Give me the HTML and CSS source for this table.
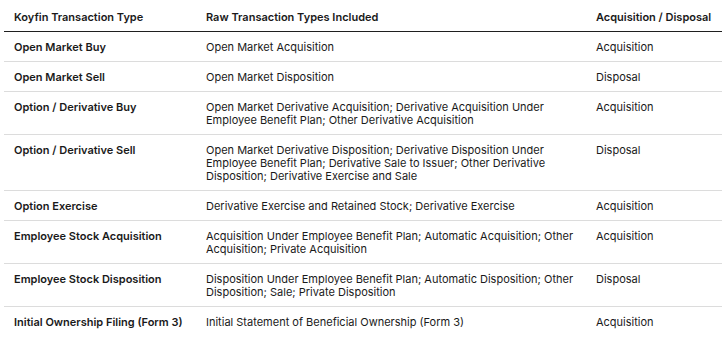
FILE: index.html
```html
<!DOCTYPE html>
<html lang="en">
<head>
<meta charset="utf-8">
<title>Koyfin Transaction Types</title>
<link rel="stylesheet" href="styles.css">
</head>
<body>
<table class="tx-table">
  <colgroup>
    <col class="col-type">
    <col class="col-raw">
    <col class="col-dir">
  </colgroup>
  <thead>
    <tr>
      <th>Koyfin Transaction Type</th>
      <th>Raw Transaction Types Included</th>
      <th>Acquisition / Disposal</th>
    </tr>
  </thead>
  <tbody>
    <tr>
      <td class="name">Open Market Buy</td>
      <td>Open Market Acquisition</td>
      <td>Acquisition</td>
    </tr>
    <tr>
      <td class="name">Open Market Sell</td>
      <td>Open Market Disposition</td>
      <td>Disposal</td>
    </tr>
    <tr>
      <td class="name">Option / Derivative Buy</td>
      <td>Open Market Derivative Acquisition; Derivative Acquisition Under Employee Benefit Plan; Other Derivative Acquisition</td>
      <td>Acquisition</td>
    </tr>
    <tr>
      <td class="name">Option / Derivative Sell</td>
      <td>Open Market Derivative Disposition; Derivative Disposition Under Employee Benefit Plan; Derivative Sale to Issuer; Other Derivative Disposition; Derivative Exercise and Sale</td>
      <td>Disposal</td>
    </tr>
    <tr>
      <td class="name">Option Exercise</td>
      <td>Derivative Exercise and Retained Stock; Derivative Exercise</td>
      <td>Acquisition</td>
    </tr>
    <tr>
      <td class="name">Employee Stock Acquisition</td>
      <td>Acquisition Under Employee Benefit Plan; Automatic Acquisition; Other Acquisition; Private Acquisition</td>
      <td>Acquisition</td>
    </tr>
    <tr>
      <td class="name">Employee Stock Disposition</td>
      <td>Disposition Under Employee Benefit Plan; Automatic Disposition; Other Disposition; Sale; Private Disposition</td>
      <td>Disposal</td>
    </tr>
    <tr>
      <td class="name">Initial Ownership Filing (Form 3)</td>
      <td>Initial Statement of Beneficial Ownership (Form 3)</td>
      <td>Acquisition</td>
    </tr>
  </tbody>
</table>
</body>
</html>
```

FILE: styles.css
```css
html, body {
  margin: 0;
  padding: 0;
  background: #ffffff;
}

body {
  font-family: Inter, "Noto Sans", "Liberation Sans", sans-serif;
  font-size: 11px;
  line-height: 13px;
  color: #1a1a1a;
  overflow: hidden;
}

.tx-table {
  border-collapse: collapse;
  table-layout: fixed;
  width: 718px;
  margin: 2px 0 0 4px;
}

.col-type { width: 192px; }
.col-raw { width: 390px; }
.col-dir { width: 136px; }

.tx-table th,
.tx-table td {
  padding: 9px 10px 7px;
  text-align: left;
  vertical-align: top;
}

.tx-table th {
  font-weight: 600;
  border-bottom: 1px solid #1f1f1f;
}

.tx-table tbody tr + tr td {
  border-top: 1px solid #dcdcdc;
}

.tx-table td.name {
  font-weight: 600;
}
```
